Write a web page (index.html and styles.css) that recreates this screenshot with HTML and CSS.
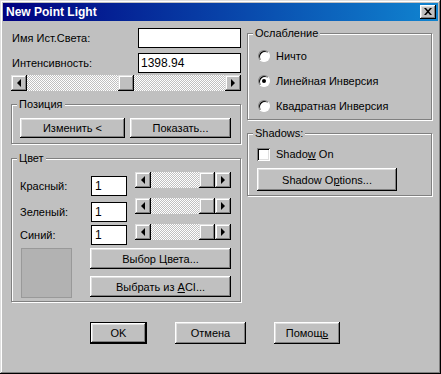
FILE: index.html
```html
<!DOCTYPE html>
<html lang="ru">
  <head>
    <meta charset="UTF-8" />
    <title>New Point Light</title>
    <link rel="stylesheet" href="styles.css">
  </head>
  <body>
    <div class="window">
      <div class="titlebar">
        <span class="title">New Point Light</span>
        <span class="close-btn">
          <svg width="8" height="7" viewBox="0 0 8 7">
            <path d="M0 0h2l2 2.2L6 0h2L5 3.5 8 7H6L4 4.8 2 7H0l3-3.5z" fill="#000" />
          </svg>
        </span>
      </div>

      <div class="content">
        <div class="col-left">
          <div class="field-row">
            <span class="label">Имя Ист.Света:</span>
            <div class="input wide"></div>
          </div>
          <div class="field-row second">
            <span class="label">Интенсивность:</span>
            <div class="input wide">1398.94</div>
          </div>
          <div class="scroll intensity">
            <span class="sb-btn"><i class="arrow-left"></i></span>
            <span class="track"></span>
            <span class="thumb"></span>
            <span class="track"></span>
            <span class="sb-btn"><i class="arrow-right"></i></span>
          </div>

          <div class="group pos-group">
            <span class="legend">Позиция</span>
            <div class="btn-row">
              <button class="btn change-btn">Изменить &lt;</button>
              <button class="btn show-btn">Показать...</button>
            </div>
          </div>

          <div class="group color-group">
            <span class="legend">Цвет</span>
            <div class="color-row r1">
              <span class="label">Красный:</span>
              <div class="input small">1</div>
              <div class="scroll color">
                <span class="sb-btn"><i class="arrow-left"></i></span>
                <span class="track"></span>
                <span class="thumb"></span>
                <span class="sb-btn"><i class="arrow-right"></i></span>
              </div>
            </div>
            <div class="color-row r2">
              <span class="label">Зеленый:</span>
              <div class="input small">1</div>
              <div class="scroll color">
                <span class="sb-btn"><i class="arrow-left"></i></span>
                <span class="track"></span>
                <span class="thumb"></span>
                <span class="sb-btn"><i class="arrow-right"></i></span>
              </div>
            </div>
            <div class="color-row r3">
              <span class="label">Синий:</span>
              <div class="input small">1</div>
              <div class="scroll color">
                <span class="sb-btn"><i class="arrow-left"></i></span>
                <span class="track"></span>
                <span class="thumb"></span>
                <span class="sb-btn"><i class="arrow-right"></i></span>
              </div>
            </div>
            <div class="swatch-row">
              <div class="swatch"></div>
              <div class="swatch-btns">
                <button class="btn">Выбор Цвета...</button>
                <button class="btn">Выбрать из <u>A</u>CI...</button>
              </div>
            </div>
          </div>
        </div>

        <div class="col-right">
          <div class="group atten-group">
            <span class="legend">Ослабление</span>
            <div class="radio-row"><span class="radio"></span><span>Ничто</span></div>
            <div class="radio-row"><span class="radio checked"></span><span>Линейная Инверсия</span></div>
            <div class="radio-row"><span class="radio"></span><span>Квадратная Инверсия</span></div>
          </div>

          <div class="group shadow-group">
            <span class="legend">Shadows:</span>
            <div class="check-row"><span class="checkbox"></span><span>Shado<u>w</u> On</span></div>
            <button class="btn shadow-btn">Shadow O<u>p</u>tions...</button>
          </div>
        </div>
      </div>

      <div class="footer">
        <button class="btn default ok-btn">OK</button>
        <button class="btn cancel-btn">Отмена</button>
        <button class="btn help-btn">Помощ<u>ь</u></button>
      </div>
    </div>
  </body>
</html>
```

FILE: styles.css
```css
body {
  margin: 0;
  font-family: "Liberation Sans", Arial, sans-serif;
  font-size: 11px;
  color: #000;
  background: #c0c0c0;
}

.window {
  width: 441px;
  height: 374px;
  box-sizing: border-box;
  padding: 3px;
  background: #c0c0c0;
  box-shadow: inset -1px -1px #000, inset 1px 1px #dfdfdf,
    inset -2px -2px #808080, inset 2px 2px #fff;
}

.titlebar {
  height: 18px;
  display: flex;
  align-items: center;
  justify-content: space-between;
  padding: 0 2px 0 3px;
  background: linear-gradient(to right, #000080, #1084d0);
}

.title {
  color: #fff;
  font-weight: bold;
  font-size: 12px;
}

.close-btn {
  width: 16px;
  height: 14px;
  display: flex;
  align-items: center;
  justify-content: center;
  background: #c0c0c0;
  box-shadow: inset -1px -1px #000, inset 1px 1px #fff,
    inset -2px -2px #808080, inset 2px 2px #dfdfdf;
}

.close-btn svg {
  display: block;
  margin: -1px 0 0 -1px;
}

.content {
  display: flex;
  gap: 6px;
  padding: 7px 0 0 8px;
}

.col-left {
  width: 230px;
}

.col-right {
  width: 185px;
  padding-top: 5px;
}

.field-row {
  display: flex;
  align-items: center;
  height: 20px;
}

.field-row.second {
  margin-top: 5px;
}

.field-row .label {
  flex: 1;
  padding-left: 1px;
}

.input {
  height: 20px;
  box-sizing: border-box;
  background: #fff;
  line-height: 18px;
  padding-left: 2px;
  border: 1px solid #000;
  font-size: 12px;
}

.input.wide {
  width: 103px;
}

.input.small {
  width: 36px;
  padding-left: 3px;
}

/* scrollbars */
.scroll {
  display: flex;
  height: 16px;
}

.scroll.intensity {
  margin-top: 2px;
}

.sb-btn,
.thumb {
  width: 16px;
  height: 16px;
  flex: none;
  display: flex;
  align-items: center;
  justify-content: center;
  background: #c0c0c0;
  box-shadow: inset -1px -1px #000, inset 1px 1px #dfdfdf,
    inset -2px -2px #808080, inset 2px 2px #fff;
}

.track {
  flex: 1;
  background: repeating-conic-gradient(#fff 0 25%, #c0c0c0 0 50%) 0 0 / 2px 2px;
}

.arrow-left,
.arrow-right {
  width: 0;
  height: 0;
  border-top: 4px solid transparent;
  border-bottom: 4px solid transparent;
}

.arrow-left {
  border-right: 4px solid #000;
  margin-left: -1px;
}

.arrow-right {
  border-left: 4px solid #000;
}

/* group boxes */
.group {
  position: relative;
  box-sizing: border-box;
  border: 1px solid #808080;
  box-shadow: inset 1px 1px #fff, 1px 1px #fff;
}

.legend {
  position: absolute;
  top: -7px;
  left: 5px;
  padding: 0 2px;
  line-height: 13px;
  background: #c0c0c0;
}

.pos-group {
  margin-top: 13px;
  height: 40px;
  padding: 13px 0 0 8px;
}

.btn-row {
  display: flex;
  gap: 5px;
}

.btn {
  font-family: inherit;
  font-size: 11px;
  color: #000;
  height: 20px;
  padding: 0;
  border: none;
  background: #c0c0c0;
  box-shadow: inset -1px -1px #000, inset 1px 1px #fff,
    inset -2px -2px #808080, inset 2px 2px #dfdfdf;
}

.change-btn {
  width: 105px;
}

.show-btn {
  width: 101px;
}

.color-group {
  margin-top: 14px;
  height: 144px;
  padding: 17px 0 0 8px;
}

.color-row {
  display: flex;
  align-items: center;
  height: 20px;
}

.color-row.r2 {
  margin-top: 6px;
}

.color-row.r3 {
  margin-top: 3px;
}

.color-row .label {
  width: 71px;
}

.scroll.color {
  width: 96px;
  margin-left: 8px;
  align-self: flex-start;
  margin-top: -4px;
}

.color-row.r3 .scroll.color {
  margin-top: -1px;
}

.swatch-row {
  display: flex;
  margin-top: 3px;
}

.swatch {
  width: 51px;
  height: 50px;
  box-sizing: border-box;
  margin-left: 1px;
  background: #b2b2b2;
  border: 1px solid #999;
}

.swatch-btns {
  display: flex;
  flex-direction: column;
  gap: 7px;
  margin-left: 18px;
}

.swatch-btns .btn {
  width: 141px;
  height: 21px;
}

/* right column */
.atten-group {
  height: 87px;
  padding: 14px 0 0 10px;
  display: flex;
  flex-direction: column;
  gap: 9px;
}

.radio-row,
.check-row {
  display: flex;
  align-items: center;
  gap: 6px;
  height: 16px;
}

.radio {
  width: 12px;
  height: 12px;
  box-sizing: border-box;
  border-radius: 50%;
  background: #fff;
  border: 1px solid;
  border-color: #808080 #fff #fff #808080;
  box-shadow: inset 1px 1px #000;
  display: flex;
  align-items: center;
  justify-content: center;
}

.radio.checked::after {
  content: "";
  width: 4px;
  height: 4px;
  border-radius: 50%;
  background: #000;
}

.shadow-group {
  margin-top: 13px;
  height: 63px;
  padding: 12px 0 0 9px;
}

.checkbox {
  width: 13px;
  height: 13px;
  background: #fff;
  box-shadow: inset 1px 1px #808080, inset -1px -1px #fff,
    inset 2px 2px #000, inset -2px -2px #dfdfdf;
}

.shadow-btn {
  display: block;
  margin-top: 6px;
  width: 140px;
  height: 23px;
}

/* bottom buttons */
.footer {
  display: flex;
  gap: 28px;
  margin-top: 20px;
  padding-left: 87px;
}

.footer .btn {
  height: 22px;
}

.btn.default {
  box-shadow: inset 0 0 0 1px #000, inset -2px -2px #000, inset 2px 2px #fff,
    inset -3px -3px #808080, inset 3px 3px #dfdfdf;
}

.ok-btn {
  width: 57px;
}

.cancel-btn {
  width: 71px;
}

.help-btn {
  width: 66px;
}
```
